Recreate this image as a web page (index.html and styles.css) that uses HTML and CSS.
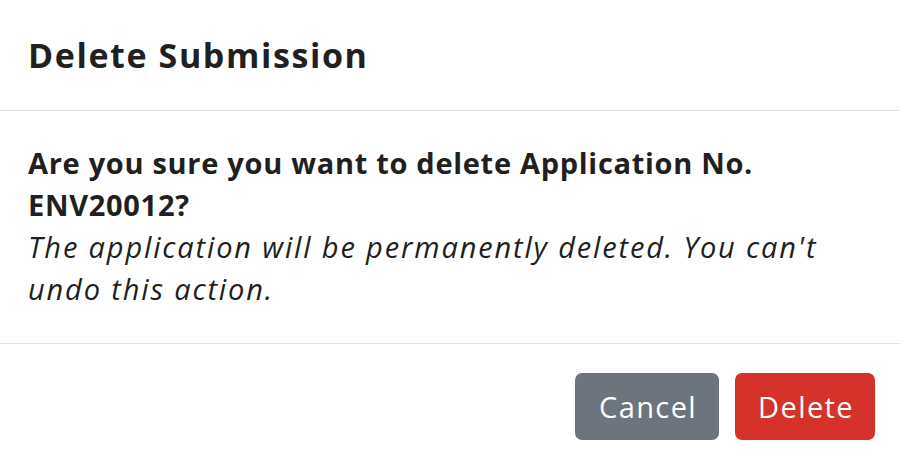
FILE: index.html
```html
<!DOCTYPE html>
<html lang="en">
<head>
<meta charset="utf-8">
<title>Delete Submission</title>
<link rel="stylesheet" href="styles.css">
</head>
<body>
<div class="modal">
  <div class="modal-header">
    <h1 class="modal-title">Delete Submission</h1>
  </div>
  <div class="modal-body">
    <p class="question">Are you sure you want to delete Application No. ENV20012?</p>
    <p class="note">The application will be permanently deleted. You can't undo this action.</p>
  </div>
  <div class="modal-footer">
    <button class="btn btn-cancel" type="button">Cancel</button>
    <button class="btn btn-delete" type="button">Delete</button>
  </div>
</div>
</body>
</html>
```

FILE: styles.css
```css
html, body {
  margin: 0;
  padding: 0;
  background: #ffffff;
}

body {
  font-family: "Open Sans", "Liberation Sans", sans-serif;
  color: #211f20;
}

.modal {
  width: 900px;
  height: 468px;
  display: flex;
  flex-direction: column;
  background: #ffffff;
}

.modal-header {
  height: 111px;
  box-sizing: border-box;
  border-bottom: 1px solid #dee2e6;
  display: flex;
  align-items: center;
  padding: 0 28px;
}

.modal-title {
  margin: 0;
  font-size: 34px;
  font-weight: 700;
  line-height: 1.2;
  letter-spacing: 1.6px;
}

.modal-body {
  padding: 31px 28px 33px;
  border-bottom: 1px solid #dee2e6;
}

.modal-body p {
  margin: 0;
  font-size: 29px;
  line-height: 42px;
}

.question {
  font-weight: 700;
  letter-spacing: 0.7px;
  width: 800px;
}

.note {
  font-style: italic;
  letter-spacing: 1.85px;
  width: 830px;
}

.modal-footer {
  flex: 1;
  display: flex;
  justify-content: flex-end;
  align-items: center;
  gap: 16px;
  padding: 1px 25px 0;
}

.btn {
  height: 67px;
  border: none;
  border-radius: 7px;
  color: #ffffff;
  font-family: "Open Sans", "Liberation Sans", sans-serif;
  font-size: 29px;
  font-weight: 400;
  letter-spacing: 1.4px;
  padding: 0 21px 0 23px;
}

.btn-cancel {
  background: #6c757d;
  padding-left: 24px;
  padding-right: 22px;
}

.btn-delete {
  background: #d5322c;
}
```
